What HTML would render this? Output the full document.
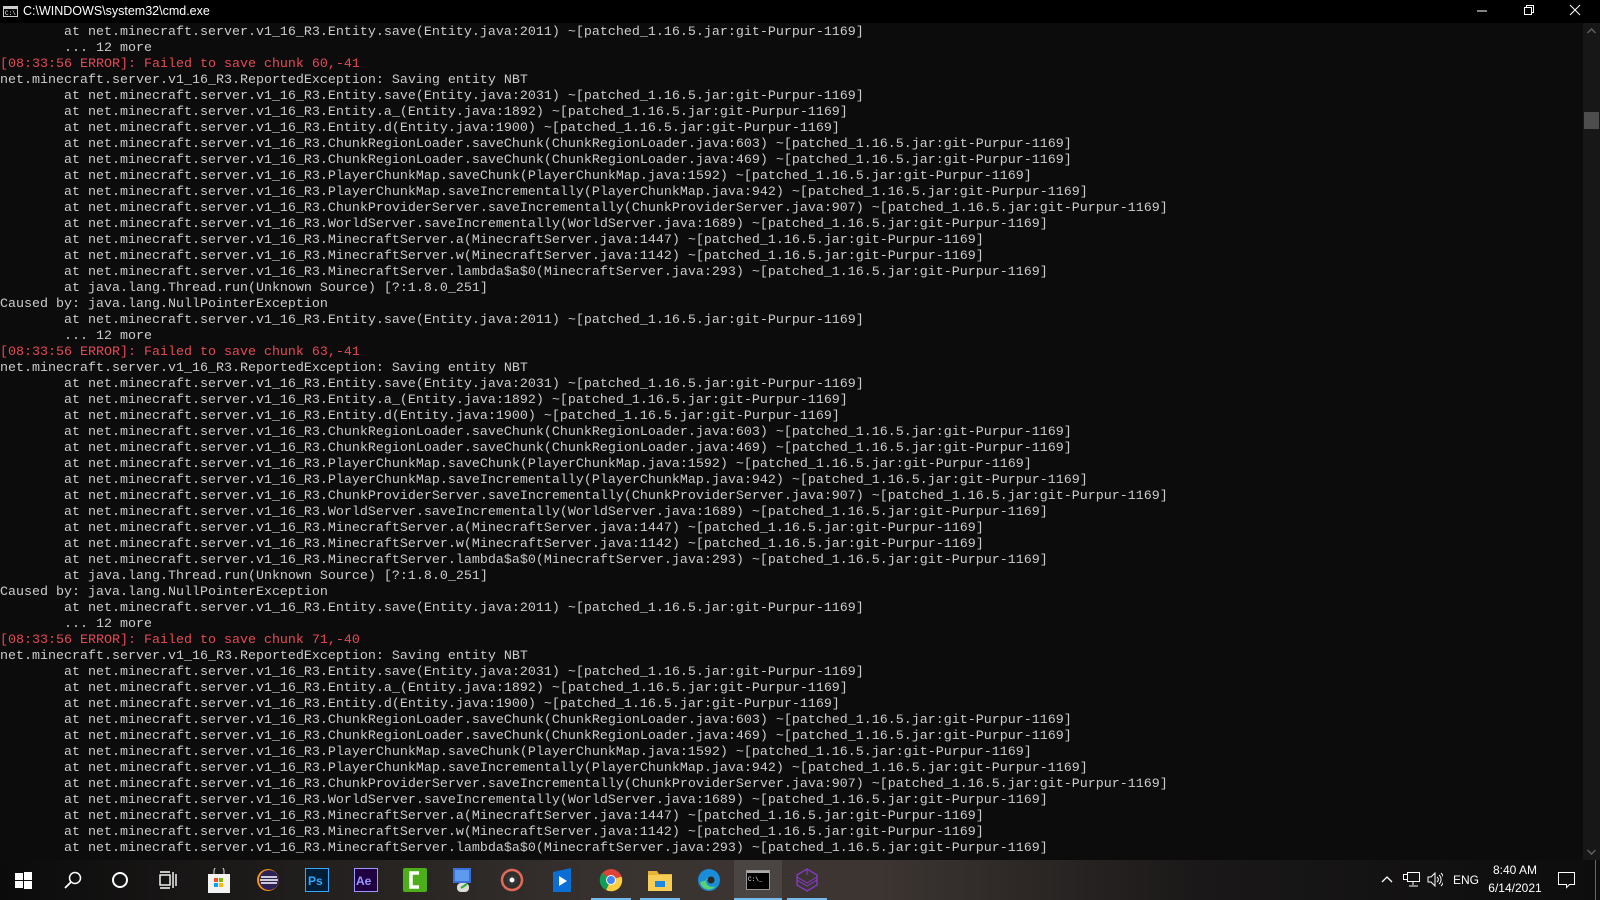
<!DOCTYPE html>
<html><head><meta charset="utf-8"><style>
*{margin:0;padding:0;box-sizing:border-box}
body{width:1600px;height:900px;overflow:hidden;background:#0c0c0c;position:relative;font-family:"Liberation Sans",sans-serif}
#title{position:absolute;left:0;top:0;width:1600px;height:23px;background:#000;color:#fff;font-size:12.5px}
#title .t{position:absolute;left:23px;top:4px}
#con{position:absolute;left:0;top:25px;width:1583px;height:835px;overflow:hidden}
pre{font-family:"Liberation Mono",monospace;font-size:13.33px;line-height:16px;color:#cccccc;white-space:pre}
.r{color:#e74856}
#sb{position:absolute;left:1583px;top:23px;width:17px;height:837px;background:#171717}
#thumb{position:absolute;left:1584px;top:112px;width:15px;height:17px;background:#4d4d4d}
#tb{position:absolute;left:0;top:860px;width:1600px;height:40px;background:linear-gradient(90deg,#0b0b0b 0%,#1c1a19 15%,#3a3431 40%,#3c3532 55%,#1a1818 75%,#0d0d0d 100%)}
.ul{position:absolute;bottom:0;height:2px;background:#76b9ed}
.tray{position:absolute;color:#fff;font-size:12px}
</style></head><body>
<div id="title"><svg style="position:absolute;left:3px;top:6px" width="15" height="11"><rect x="0.5" y="0.5" width="14" height="10" fill="#000" stroke="#ccc"/><rect x="1" y="1" width="13" height="2" fill="#ccc"/><text x="2" y="9" font-size="6" fill="#fff" font-family="Liberation Mono">C:\</text></svg><span class="t">C:\WINDOWS\system32\cmd.exe</span>
<svg style="position:absolute;left:1476px;top:5px" width="12" height="12"><line x1="1" y1="6" x2="11" y2="6" stroke="#fff"/></svg>
<svg style="position:absolute;left:1523px;top:4px" width="12" height="12"><rect x="1.5" y="3.5" width="7" height="7" fill="none" stroke="#fff"/><path d="M3.5 3.5V1.5H10.5V8.5H8.5" fill="none" stroke="#fff"/></svg>
<svg style="position:absolute;left:1569px;top:4px" width="12" height="12"><path d="M1 1L11 11M11 1L1 11" stroke="#fff"/></svg>
</div>
<div id="con"><pre>        at net.minecraft.server.v1_16_R3.Entity.save(Entity.java:2011) ~[patched_1.16.5.jar:git-Purpur-1169]
        ... 12 more
<span class="r">[08:33:56 ERROR]: Failed to save chunk 60,-41</span>
net.minecraft.server.v1_16_R3.ReportedException: Saving entity NBT
        at net.minecraft.server.v1_16_R3.Entity.save(Entity.java:2031) ~[patched_1.16.5.jar:git-Purpur-1169]
        at net.minecraft.server.v1_16_R3.Entity.a_(Entity.java:1892) ~[patched_1.16.5.jar:git-Purpur-1169]
        at net.minecraft.server.v1_16_R3.Entity.d(Entity.java:1900) ~[patched_1.16.5.jar:git-Purpur-1169]
        at net.minecraft.server.v1_16_R3.ChunkRegionLoader.saveChunk(ChunkRegionLoader.java:603) ~[patched_1.16.5.jar:git-Purpur-1169]
        at net.minecraft.server.v1_16_R3.ChunkRegionLoader.saveChunk(ChunkRegionLoader.java:469) ~[patched_1.16.5.jar:git-Purpur-1169]
        at net.minecraft.server.v1_16_R3.PlayerChunkMap.saveChunk(PlayerChunkMap.java:1592) ~[patched_1.16.5.jar:git-Purpur-1169]
        at net.minecraft.server.v1_16_R3.PlayerChunkMap.saveIncrementally(PlayerChunkMap.java:942) ~[patched_1.16.5.jar:git-Purpur-1169]
        at net.minecraft.server.v1_16_R3.ChunkProviderServer.saveIncrementally(ChunkProviderServer.java:907) ~[patched_1.16.5.jar:git-Purpur-1169]
        at net.minecraft.server.v1_16_R3.WorldServer.saveIncrementally(WorldServer.java:1689) ~[patched_1.16.5.jar:git-Purpur-1169]
        at net.minecraft.server.v1_16_R3.MinecraftServer.a(MinecraftServer.java:1447) ~[patched_1.16.5.jar:git-Purpur-1169]
        at net.minecraft.server.v1_16_R3.MinecraftServer.w(MinecraftServer.java:1142) ~[patched_1.16.5.jar:git-Purpur-1169]
        at net.minecraft.server.v1_16_R3.MinecraftServer.lambda$a$0(MinecraftServer.java:293) ~[patched_1.16.5.jar:git-Purpur-1169]
        at java.lang.Thread.run(Unknown Source) [?:1.8.0_251]
Caused by: java.lang.NullPointerException
        at net.minecraft.server.v1_16_R3.Entity.save(Entity.java:2011) ~[patched_1.16.5.jar:git-Purpur-1169]
        ... 12 more
<span class="r">[08:33:56 ERROR]: Failed to save chunk 63,-41</span>
net.minecraft.server.v1_16_R3.ReportedException: Saving entity NBT
        at net.minecraft.server.v1_16_R3.Entity.save(Entity.java:2031) ~[patched_1.16.5.jar:git-Purpur-1169]
        at net.minecraft.server.v1_16_R3.Entity.a_(Entity.java:1892) ~[patched_1.16.5.jar:git-Purpur-1169]
        at net.minecraft.server.v1_16_R3.Entity.d(Entity.java:1900) ~[patched_1.16.5.jar:git-Purpur-1169]
        at net.minecraft.server.v1_16_R3.ChunkRegionLoader.saveChunk(ChunkRegionLoader.java:603) ~[patched_1.16.5.jar:git-Purpur-1169]
        at net.minecraft.server.v1_16_R3.ChunkRegionLoader.saveChunk(ChunkRegionLoader.java:469) ~[patched_1.16.5.jar:git-Purpur-1169]
        at net.minecraft.server.v1_16_R3.PlayerChunkMap.saveChunk(PlayerChunkMap.java:1592) ~[patched_1.16.5.jar:git-Purpur-1169]
        at net.minecraft.server.v1_16_R3.PlayerChunkMap.saveIncrementally(PlayerChunkMap.java:942) ~[patched_1.16.5.jar:git-Purpur-1169]
        at net.minecraft.server.v1_16_R3.ChunkProviderServer.saveIncrementally(ChunkProviderServer.java:907) ~[patched_1.16.5.jar:git-Purpur-1169]
        at net.minecraft.server.v1_16_R3.WorldServer.saveIncrementally(WorldServer.java:1689) ~[patched_1.16.5.jar:git-Purpur-1169]
        at net.minecraft.server.v1_16_R3.MinecraftServer.a(MinecraftServer.java:1447) ~[patched_1.16.5.jar:git-Purpur-1169]
        at net.minecraft.server.v1_16_R3.MinecraftServer.w(MinecraftServer.java:1142) ~[patched_1.16.5.jar:git-Purpur-1169]
        at net.minecraft.server.v1_16_R3.MinecraftServer.lambda$a$0(MinecraftServer.java:293) ~[patched_1.16.5.jar:git-Purpur-1169]
        at java.lang.Thread.run(Unknown Source) [?:1.8.0_251]
Caused by: java.lang.NullPointerException
        at net.minecraft.server.v1_16_R3.Entity.save(Entity.java:2011) ~[patched_1.16.5.jar:git-Purpur-1169]
        ... 12 more
<span class="r">[08:33:56 ERROR]: Failed to save chunk 71,-40</span>
net.minecraft.server.v1_16_R3.ReportedException: Saving entity NBT
        at net.minecraft.server.v1_16_R3.Entity.save(Entity.java:2031) ~[patched_1.16.5.jar:git-Purpur-1169]
        at net.minecraft.server.v1_16_R3.Entity.a_(Entity.java:1892) ~[patched_1.16.5.jar:git-Purpur-1169]
        at net.minecraft.server.v1_16_R3.Entity.d(Entity.java:1900) ~[patched_1.16.5.jar:git-Purpur-1169]
        at net.minecraft.server.v1_16_R3.ChunkRegionLoader.saveChunk(ChunkRegionLoader.java:603) ~[patched_1.16.5.jar:git-Purpur-1169]
        at net.minecraft.server.v1_16_R3.ChunkRegionLoader.saveChunk(ChunkRegionLoader.java:469) ~[patched_1.16.5.jar:git-Purpur-1169]
        at net.minecraft.server.v1_16_R3.PlayerChunkMap.saveChunk(PlayerChunkMap.java:1592) ~[patched_1.16.5.jar:git-Purpur-1169]
        at net.minecraft.server.v1_16_R3.PlayerChunkMap.saveIncrementally(PlayerChunkMap.java:942) ~[patched_1.16.5.jar:git-Purpur-1169]
        at net.minecraft.server.v1_16_R3.ChunkProviderServer.saveIncrementally(ChunkProviderServer.java:907) ~[patched_1.16.5.jar:git-Purpur-1169]
        at net.minecraft.server.v1_16_R3.WorldServer.saveIncrementally(WorldServer.java:1689) ~[patched_1.16.5.jar:git-Purpur-1169]
        at net.minecraft.server.v1_16_R3.MinecraftServer.a(MinecraftServer.java:1447) ~[patched_1.16.5.jar:git-Purpur-1169]
        at net.minecraft.server.v1_16_R3.MinecraftServer.w(MinecraftServer.java:1142) ~[patched_1.16.5.jar:git-Purpur-1169]
        at net.minecraft.server.v1_16_R3.MinecraftServer.lambda$a$0(MinecraftServer.java:293) ~[patched_1.16.5.jar:git-Purpur-1169]</pre></div>
<div id="sb"><svg style="position:absolute;left:4px;top:5px" width="9" height="6"><path d="M0.5 5L4.5 1L8.5 5" stroke="#606060" stroke-width="1.5" fill="none"/></svg><svg style="position:absolute;left:4px;top:826px" width="9" height="6"><path d="M0.5 1L4.5 5L8.5 1" stroke="#606060" stroke-width="1.5" fill="none"/></svg></div>
<div id="thumb"></div>
<div id="tb">
<svg style="position:absolute;left:15px;top:12px" width="17" height="17"><rect x="0" y="1" width="8" height="7" fill="#fff"/><rect x="9" y="0" width="8" height="8" fill="#fff"/><rect x="0" y="9" width="8" height="7" fill="#fff"/><rect x="9" y="9" width="8" height="8" fill="#fff"/></svg>
<svg style="position:absolute;left:64px;top:11px" width="18" height="18"><circle cx="11" cy="7" r="5.5" stroke="#fff" stroke-width="1.5" fill="none"/><line x1="7" y1="11" x2="1" y2="17" stroke="#fff" stroke-width="1.8"/></svg>
<svg style="position:absolute;left:111px;top:11px" width="18" height="18"><circle cx="9" cy="9" r="7" stroke="#fff" stroke-width="2" fill="none"/></svg>
<svg style="position:absolute;left:159px;top:11px" width="18" height="18"><rect x="1" y="4" width="10" height="10" stroke="#fff" stroke-width="1.4" fill="none"/><path d="M1 1h10M1 17h10M14 1v16M17 3v12" stroke="#fff" stroke-width="1.4"/></svg>
<svg style="position:absolute;left:207px;top:8px" width="24" height="26"><path d="M7 6V3a5 5 0 0 1 10 0v3" stroke="#ddd" fill="none"/><rect x="1" y="6" width="22" height="19" fill="#f3f3f3"/><rect x="7" y="10" width="4" height="4" fill="#f25022"/><rect x="12" y="10" width="4" height="4" fill="#7fba00"/><rect x="7" y="15" width="4" height="4" fill="#00a4ef"/><rect x="12" y="15" width="4" height="4" fill="#ffb900"/></svg>
<svg style="position:absolute;left:256px;top:8px" width="24" height="24"><circle cx="12" cy="12" r="11" fill="#f7941e"/><circle cx="13" cy="12" r="10" fill="#2c2255"/><path d="M5 9h16M4 12h18M5 15h16" stroke="#fff" stroke-width="1.6"/></svg>
<svg style="position:absolute;left:305px;top:8px" width="24" height="24"><rect x="0.5" y="0.5" width="23" height="23" fill="#001e36" stroke="#31a8ff"/><text x="3" y="17" font-size="12" font-weight="bold" fill="#31a8ff" font-family="Liberation Sans">Ps</text></svg>
<svg style="position:absolute;left:354px;top:8px" width="24" height="24"><rect x="0.5" y="0.5" width="23" height="23" fill="#1f0040" stroke="#9999ff"/><text x="2" y="17" font-size="12" font-weight="bold" fill="#9999ff" font-family="Liberation Sans">Ae</text></svg>
<svg style="position:absolute;left:403px;top:8px" width="24" height="24"><rect x="0" y="0" width="24" height="24" rx="2" fill="#4caf1a"/><path d="M16 5H8v14h8" stroke="#fff" stroke-width="3.5" fill="none"/></svg>
<svg style="position:absolute;left:451px;top:7px" width="24" height="26"><rect x="2" y="1" width="18" height="15" fill="#3a6fd8"/><rect x="4" y="3" width="14" height="11" fill="#5d9bf0"/><rect x="6" y="16" width="12" height="9" rx="4" fill="#ddd"/><path d="M10 21l6-4" stroke="#3a3" stroke-width="2"/></svg>
<svg style="position:absolute;left:500px;top:8px" width="24" height="24"><circle cx="12" cy="12" r="10" stroke="#e06a5a" stroke-width="2.5" fill="none"/><circle cx="12" cy="12" r="6" fill="#333"/><circle cx="12" cy="12" r="2.5" fill="#fff"/></svg>
<svg style="position:absolute;left:550px;top:7px" width="24" height="26"><path d="M3 5l18-4v24H3z" fill="#0a6fd4"/><path d="M9 9l8 5-8 5z" fill="#fff"/></svg>
<svg style="position:absolute;left:599px;top:8px" width="24" height="24"><circle cx="12" cy="12" r="11" fill="#db4437"/><path d="M12 12L22.5 8.5A11 11 0 0 1 7 22z" fill="#ffcd40"/><path d="M12 12L7 22A11 11 0 0 1 1.5 8z" fill="#0f9d58"/><path d="M12 12L1.5 8A11 11 0 0 1 3 5z" fill="#0f9d58"/><circle cx="12" cy="12" r="5" fill="#fff"/><circle cx="12" cy="12" r="4" fill="#4285f4"/></svg>
<svg style="position:absolute;left:648px;top:9px" width="24" height="22"><path d="M0 2h9l2 3h13v17H0z" fill="#e8b437"/><rect x="0" y="6" width="24" height="16" fill="#f8cd55"/><rect x="7" y="12" width="10" height="6" fill="#1e88e5"/></svg>
<svg style="position:absolute;left:697px;top:8px" width="24" height="24"><circle cx="12" cy="12" r="11" fill="#1a8cd8"/><path d="M3 14a9 9 0 0 0 16 4c-5 2-10 0-10-5 0-3 4-5 8-3" fill="#5ad174"/><circle cx="14" cy="12" r="3.5" fill="#2a2624"/></svg>
<div style="position:absolute;left:734px;top:0;width:48px;height:40px;background:#4a4543"></div>
<svg style="position:absolute;left:746px;top:10px" width="24" height="20"><rect x="0.5" y="0.5" width="23" height="19" fill="#000" stroke="#999"/><rect x="1" y="1" width="22" height="2" fill="#aaa"/><text x="2" y="11" font-size="6" fill="#fff" font-family="Liberation Mono">C:\_</text></svg>
<svg style="position:absolute;left:795px;top:8px" width="24" height="24"><path d="M12 1l10 6v10l-10 6-10-6V7z" fill="none" stroke="#8a3ccc" stroke-width="1.3"/><path d="M2 12l10 6 10-6M2 9l10 6 10-6M12 1v6" fill="none" stroke="#8a3ccc" stroke-width="1"/></svg>
<div class="ul" style="left:591px;width:40px"></div>
<div class="ul" style="left:640px;width:40px"></div>
<div class="ul" style="left:734px;width:48px"></div>
<div class="ul" style="left:787px;width:40px"></div>
<svg style="position:absolute;left:1381px;top:15px" width="12" height="8"><path d="M1 7L6 2L11 7" stroke="#fff" stroke-width="1.3" fill="none"/></svg>
<svg style="position:absolute;left:1403px;top:12px" width="17" height="15"><rect x="4.5" y="0.5" width="12" height="9" stroke="#fff" fill="none"/><rect x="0.5" y="2.5" width="4" height="5" stroke="#fff" fill="#000"/><path d="M10 10v3M6 14h9" stroke="#fff"/></svg>
<svg style="position:absolute;left:1427px;top:12px" width="16" height="15"><path d="M1 5h3l4-4v13l-4-4H1z" stroke="#fff" fill="none"/><path d="M10 5a3 3 0 0 1 0 5M12 3a6 6 0 0 1 0 9M14 1a9 9 0 0 1 0 13" stroke="#fff" fill="none"/></svg>
<div class="tray" style="left:1453px;top:13px">ENG</div>
<div class="tray" style="left:1490px;top:3px;width:50px;text-align:center">8:40 AM</div>
<div class="tray" style="left:1486px;top:21px;width:58px;text-align:center">6/14/2021</div>
<svg style="position:absolute;left:1558px;top:12px" width="18" height="17"><path d="M0.5 0.5h16v12h-5l-3 3v-3H0.5z" stroke="#fff" fill="none"/></svg>
<div style="position:absolute;left:1595px;top:0;width:1px;height:40px;background:#666"></div>
</div>
</body></html>
